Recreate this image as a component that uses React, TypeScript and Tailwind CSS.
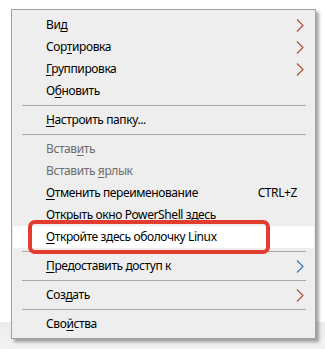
import type { FC, ReactNode } from "react";

type Item = {
  label: ReactNode;
  disabled?: boolean;
  sub?: string;
  shortcut?: string;
  active?: boolean;
};

const U: FC<{ children: ReactNode }> = ({ children }) => (
  <span className="underline underline-offset-[2px] decoration-[1px]">{children}</span>
);

const Chevron: FC<{ color: string }> = ({ color }) => (
  <svg width="8" height="13" viewBox="0 0 8 13" className="absolute right-[10px] top-[5px]">
    <path d="M1 0.5 L7 6.5 L1 12.5" fill="none" stroke={color} strokeWidth="1.1" />
  </svg>
);

const Row: FC<Item> = ({ label, disabled, sub, shortcut, active }) => (
  <div
    className={`relative flex h-[22px] items-center pl-[33px] pr-[17px] ${
      active ? "bg-white" : ""
    } ${disabled ? "text-[#6d6d6d]" : "text-black"}`}
  >
    <span className="flex-1 whitespace-nowrap">{label}</span>
    {shortcut && <span className="whitespace-nowrap">{shortcut}</span>}
    {sub && <Chevron color={sub} />}
  </div>
);

const Sep: FC = () => (
  <div className="flex h-[7px] items-start pt-[3px]">
    <div className="ml-[9px] mr-[8px] h-px flex-1 bg-[#a8a8a8]" />
  </div>
);

const App: FC = () => {
  return (
    <div className="h-[349px] w-[325px] overflow-hidden bg-[linear-gradient(to_bottom,#ffffff_322px,#ececec_322px,#f2f2f2_349px)] pl-[11px] pt-[9px]">
      <div
        className="relative w-[305px] border border-[#a0a0a0] bg-[#eeeeee] px-[1px] pb-[3px] pt-[4px] text-[12px] leading-none tracking-[-0.4px] shadow-[3px_3px_3px_rgba(0,0,0,0.35)]"
        style={{ fontFamily: '"Noto Sans", "Open Sans", sans-serif' }}
      >
        <Row label={<>Ви<U>д</U></>} sub="#b04a34" />
        <Row label={<>Сор<U>т</U>ировка</>} sub="#b04a34" />
        <Row label={<><U>Г</U>руппировка</>} sub="#b04a34" />
        <Row label={<>О<U>б</U>новить</>} />
        <Sep />
        <Row label={<><U>Н</U>астроить папку...</>} />
        <Sep />
        <Row label={<>Встав<U>и</U>ть</>} disabled />
        <Row label={<>Вставить <U>я</U>рлык</>} disabled />
        <Row label={<><U>О</U>тменить переименование</>} shortcut="CTRL+Z" />
        <Row label={<>Открыть окно PowerShell здесь</>} />
        <Row label={<><U>О</U>ткройте здесь оболочку Linux</>} active />
        <Sep />
        <Row label={<><U>П</U>редоставить доступ к</>} sub="#3d6fb8" />
        <Sep />
        <Row label={<>Соз<U>д</U>ать</>} sub="#b04a34" />
        <Sep />
        <Row label={<>Сво<U>й</U>ства</>} />

        <div className="absolute left-[16px] top-[210px] h-[34px] w-[242px] rounded-[7px] border-[4px] border-[#e23c2e]" />
      </div>
    </div>
  );
};

export default App;
